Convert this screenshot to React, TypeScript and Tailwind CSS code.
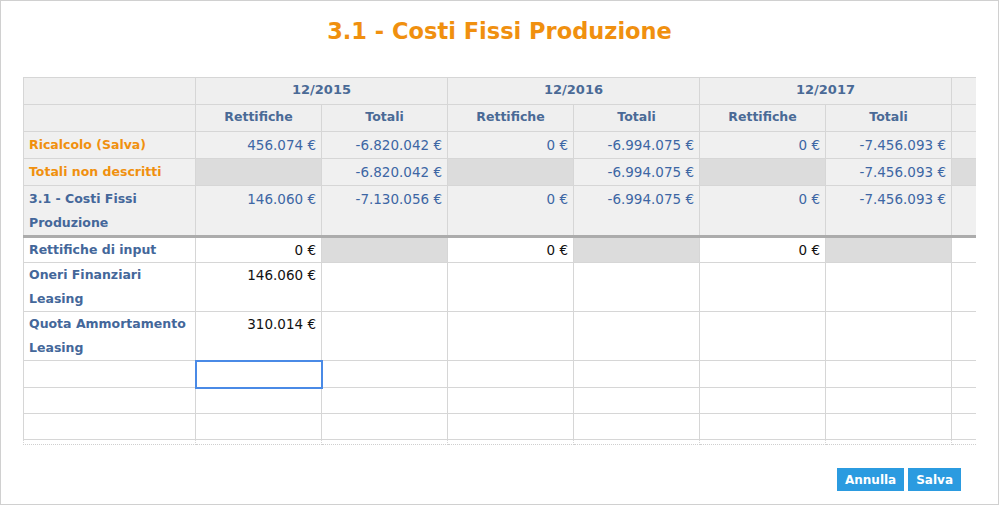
import React from "react";

const years = ["12/2015", "12/2016", "12/2017"];

type Top = { label: string; orange?: boolean; twoLine?: boolean; ret: string[]; tot: string[]; darkRet?: boolean };

const topRows: Top[] = [
  { label: "Ricalcolo (Salva)", orange: true, ret: ["456.074 €", "0 €", "0 €"], tot: ["-6.820.042 €", "-6.994.075 €", "-7.456.093 €"] },
  { label: "Totali non descritti", orange: true, darkRet: true, ret: ["", "", ""], tot: ["-6.820.042 €", "-6.994.075 €", "-7.456.093 €"] },
  { label: "3.1 - Costi Fissi Produzione", twoLine: true, ret: ["146.060 €", "0 €", "0 €"], tot: ["-7.130.056 €", "-6.994.075 €", "-7.456.093 €"] },
];

const cell = "border border-[#d6d6d6] px-[5px] align-top";
const lastCell = cell + " border-r-0";
const num = " text-right text-[13.5px]";

export default function App() {
  return (
    <div className="w-[999px] h-[505px] border border-[#d0d0d0] bg-white flex flex-col font-['DejaVu_Sans',Verdana,sans-serif]">
      <h1 className="text-center text-[22.5px] font-bold text-[#f0900f] mt-[15px] leading-[30px]">
        3.1 - Costi Fissi Produzione
      </h1>

      <div className="mt-[31px] ml-[22px]">
        <table className="table-fixed border-collapse text-[12.5px] leading-[24px] w-[952px]">
          <colgroup>
            <col className="w-[172px]" />
            {[0, 1, 2, 3, 4, 5].map((i) => (
              <col key={i} className="w-[126px]" />
            ))}
            <col className="w-[24px]" />
          </colgroup>
          <thead>
            <tr className="h-[27px] bg-[#efefef] text-[#4a6a96] font-bold">
              <th className={cell} />
              {years.map((y) => (
                <th key={y} colSpan={2} className={cell + " text-center align-middle text-[13px]"}>
                  {y}
                </th>
              ))}
              <th className={lastCell} />
            </tr>
            <tr className="h-[27px] bg-[#efefef] text-[#4a6a96] font-bold">
              <th className={cell} />
              {years.map((y) => (
                <React.Fragment key={y}>
                  <th className={cell + " text-center align-middle"}>Rettifiche</th>
                  <th className={cell + " text-center align-middle"}>Totali</th>
                </React.Fragment>
              ))}
              <th className={lastCell} />
            </tr>
          </thead>
          <tbody>
            {topRows.map((r, idx) => {
              const last = idx === topRows.length - 1;
              const b = last ? " border-b-[3px] border-b-[#acacac]" : "";
              return (
                <tr key={r.label} className={"bg-[#f0f0f0] " + (r.twoLine ? "h-[50px]" : "h-[27px]")}>
                  <td className={cell + b + " font-bold pt-[1px] " + (r.orange ? "text-[#f0900f]" : "text-[#44679a]")}>
                    {r.twoLine ? (
                      <>
                        3.1 - Costi Fissi
                        <br />
                        Produzione
                      </>
                    ) : (
                      r.label
                    )}
                  </td>
                  {years.map((y, i) => (
                    <React.Fragment key={y}>
                      <td className={cell + b + num + " pt-[1px] text-[#3d66a4] " + (r.darkRet ? "bg-[#dcdcdc]" : "")}>
                        {r.ret[i]}
                      </td>
                      <td className={cell + b + num + " pt-[1px] text-[#3d66a4]"}>{r.tot[i]}</td>
                    </React.Fragment>
                  ))}
                  <td className={lastCell + b + (r.darkRet ? " bg-[#dcdcdc]" : "")} />
                </tr>
              );
            })}

            <tr className="h-[24px] bg-white">
              <td className={cell + " font-bold text-[#44679a]"}>Rettifiche di input</td>
              {years.map((y) => (
                <React.Fragment key={y}>
                  <td className={cell + num + " text-[#111]"}>0 €</td>
                  <td className={cell + " bg-[#dcdcdc]"} />
                </React.Fragment>
              ))}
              <td className={lastCell} />
            </tr>

            {[
              ["Oneri Finanziari", "Leasing", "146.060 €"],
              ["Quota Ammortamento", "Leasing", "310.014 €"],
            ].map(([a, c, v]) => (
              <tr key={a} className="h-[48px]">
                <td className={cell + " font-bold text-[#44679a] whitespace-nowrap"}>
                  {a}
                  <br />
                  {c}
                </td>
                <td className={cell + num + " text-[#111]"}>{v}</td>
                {[0, 1, 2, 3, 4].map((i) => (
                  <td key={i} className={cell} />
                ))}
                <td className={lastCell} />
              </tr>
            ))}

            {[0, 1, 2].map((r) => (
              <tr key={r} className={r === 0 ? "h-[27px]" : "h-[26px]"}>
                <td className={cell} />
                <td className={cell + (r === 0 ? " outline-2 outline-[#4a8ae6] -outline-offset-1" : "")} />
                {[0, 1, 2, 3, 4].map((i) => (
                  <td key={i} className={cell} />
                ))}
                <td className={lastCell} />
              </tr>
            ))}
            <tr className="h-[5px]">
              {[0, 1, 2, 3, 4, 5, 6, 7].map((i) => (
                <td
                  key={i}
                  className={
                    "border-l border-[#d6d6d6] border-b border-b-[#cfcfcf] border-dotted p-0" +
                    (i === 7 ? "" : " border-r")
                  }
                />
              ))}
            </tr>
          </tbody>
        </table>
      </div>

      <div className="mt-auto mb-[13px] mr-[37px] flex justify-end gap-[4px]">
        <button className="h-[23px] px-[8px] bg-[#2b9be0] text-white text-[12px] font-bold">Annulla</button>
        <button className="h-[23px] px-[8px] bg-[#2b9be0] text-white text-[12px] font-bold">Salva</button>
      </div>
    </div>
  );
}
